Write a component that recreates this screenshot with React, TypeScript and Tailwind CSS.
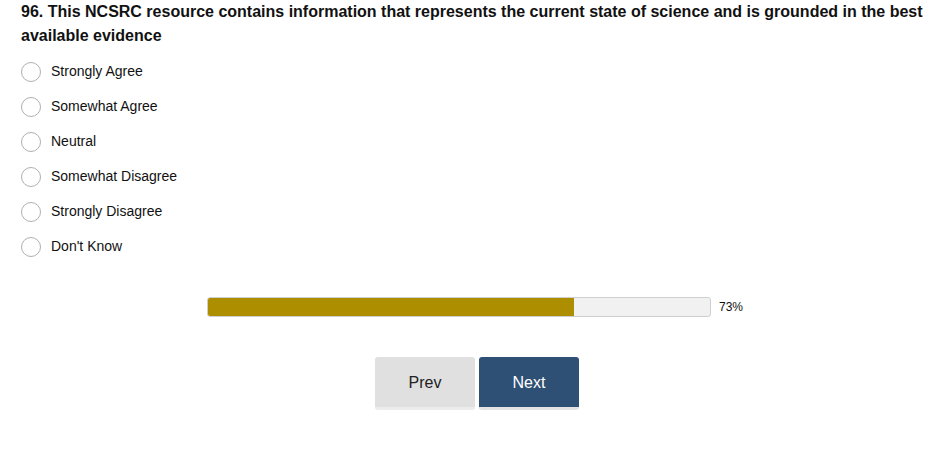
import { useState } from 'react'

const options = [
  'Strongly Agree',
  'Somewhat Agree',
  'Neutral',
  'Somewhat Disagree',
  'Strongly Disagree',
  "Don't Know",
]

export default function App() {
  const [selected, setSelected] = useState<string | null>(null)
  const progress = 73

  return (
    <div className="w-[952px] h-[455px] bg-white font-['Liberation_Sans',Arial,sans-serif] text-black">
      <div className="pl-[21px] pr-[20px] pt-[0px]">
        <h2 className="text-[16px] leading-[24px] font-bold text-[#111]">
          96. This NCSRC resource contains information that represents the current state of science and is grounded in the best available evidence
        </h2>
        <div className="mt-[6px] flex flex-col">
          {options.map((opt) => (
            <label key={opt} className="flex items-center h-[35px] cursor-pointer">
              <input
                type="radio"
                name="q96"
                checked={selected === opt}
                onChange={() => setSelected(opt)}
                className="sr-only"
              />
              <span className="w-[20px] h-[20px] rounded-full border border-[#b0b0b0] bg-white flex items-center justify-center">
                {selected === opt && <span className="w-[10px] h-[10px] rounded-full bg-[#2f5075]" />}
              </span>
              <span className="ml-[10px] text-[14px] text-[#111]">{opt}</span>
            </label>
          ))}
        </div>
      </div>

      <div className="mt-[33px] pr-[2px] flex items-center justify-center">
        <div className="w-[504px] h-[20px] rounded-[3px] border border-[#cfcfcf] bg-[#f1f1f1] overflow-hidden">
          <div className="h-full bg-[#ad8e00]" style={{ width: `${progress}%` }} />
        </div>
        <span className="ml-[8px] text-[12px] text-[#111]">{progress}%</span>
      </div>

      <div className="mt-[40px] pl-[2px] flex justify-center gap-[4px]">
        <button
          type="button"
          className="w-[100px] h-[53px] pt-[2px] rounded-[3px] bg-[#e0e0e0] border-b-[3px] border-[#ececec] text-[16px] text-[#222]"
        >
          Prev
        </button>
        <button
          type="button"
          className="w-[100px] h-[53px] pt-[2px] rounded-[3px] bg-[#2f5075] border-b-[3px] border-[#e3e3e3] text-[16px] text-white"
        >
          Next
        </button>
      </div>
    </div>
  )
}
